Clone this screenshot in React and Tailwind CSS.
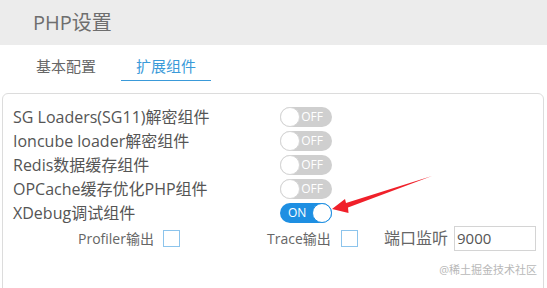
import React from 'react';

const font = { fontFamily: '"Open Sans", "Noto Sans CJK SC", sans-serif' };

const Toggle = ({ on }) =>
  on ? (
    <div className="relative flex h-[20px] w-[52px] shrink-0 items-center rounded-full bg-[#1e8fe2]">
      <span className="pl-[8px] text-[12px] leading-none text-white">ON</span>
      <span className="absolute right-0 top-0 h-[20px] w-[20px] rounded-full border border-[#1e8fe2] bg-white" />
    </div>
  ) : (
    <div className="relative flex h-[20px] w-[52px] shrink-0 items-center justify-end rounded-full bg-[#cfcfcf]">
      <span className="pr-[9px] text-[12px] leading-none text-white">OFF</span>
      <span className="absolute left-0 top-0 h-[20px] w-[20px] rounded-full border border-[#d6d6d6] bg-white" />
    </div>
  );

const rows = [
  { label: 'SG Loaders(SG11)解密组件', on: false },
  { label: 'Ioncube loader解密组件', on: false },
  { label: 'Redis数据缓存组件', on: false },
  { label: 'OPCache缓存优化PHP组件', on: false },
  { label: 'XDebug调试组件', on: true },
];

const Checkbox = () => (
  <span className="inline-block h-[17px] w-[17px] shrink-0 border border-[#8cc4ec] bg-white" />
);

export default function App() {
  return (
    <div className="relative h-[288px] w-[547px] overflow-hidden bg-white" style={font}>
      {/* header */}
      <div className="flex h-[45px] items-center bg-[#ececec] pl-[33px]">
        <span className="text-[20px] text-[#6e6e6e]">PHP设置</span>
      </div>

      {/* tabs */}
      <div className="flex h-[36px] items-end pl-[21px]">
        <div className="flex w-[90px] justify-center pb-[4px] text-[15px] text-[#666]">基本配置</div>
        <div className="ml-[10px] flex w-[90px] justify-center border-b-[1.5px] border-[#3a9ad9] pb-[3px] text-[15px] text-[#3a9ad9]">
          扩展组件
        </div>
      </div>

      {/* panel */}
      <div className="ml-[2px] mr-[3px] mt-[12px] h-[220px] rounded-t-[6px] border border-[#dcdcdc] pl-[10px] pt-[11px]">
        {rows.map((r) => (
          <div key={r.label} className="flex h-[24px] items-center">
            <span className="w-[267px] shrink-0 whitespace-nowrap text-[16px] text-[#555]">{r.label}</span>
            <Toggle on={r.on} />
          </div>
        ))}
        <div className="flex h-[26px] items-center whitespace-nowrap text-[14px] text-[#666]">
          <span className="ml-[65px] w-[76px] shrink-0">Profiler输出</span>
          <span className="ml-[9px] flex shrink-0"><Checkbox /></span>
          <span className="ml-[87px] w-[65px] shrink-0">Trace输出</span>
          <span className="ml-[9px] flex shrink-0"><Checkbox /></span>
          <span className="ml-[26px] w-[66px] shrink-0 text-[16px]">端口监听</span>
          <input
            className="ml-[4px] h-[25px] w-[82px] shrink-0 border border-[#d4d4d4] pl-[2px] text-[15px] text-[#555] outline-none"
            defaultValue="9000"
            style={font}
          />
        </div>
      </div>

      {/* watermark */}
      <div className="absolute bottom-[10px] right-[10px] text-[11px] text-[#b8b8b8]">@稀土掘金技术社区</div>

      {/* red arrow annotation */}
      <svg className="absolute left-0 top-0" width="547" height="288" viewBox="0 0 547 288">
        <polygon
          points="332,209 345,199 346,203 432,176 348,207.5 348.5,213"
          fill="#f0202a"
        />
      </svg>
    </div>
  );
}
